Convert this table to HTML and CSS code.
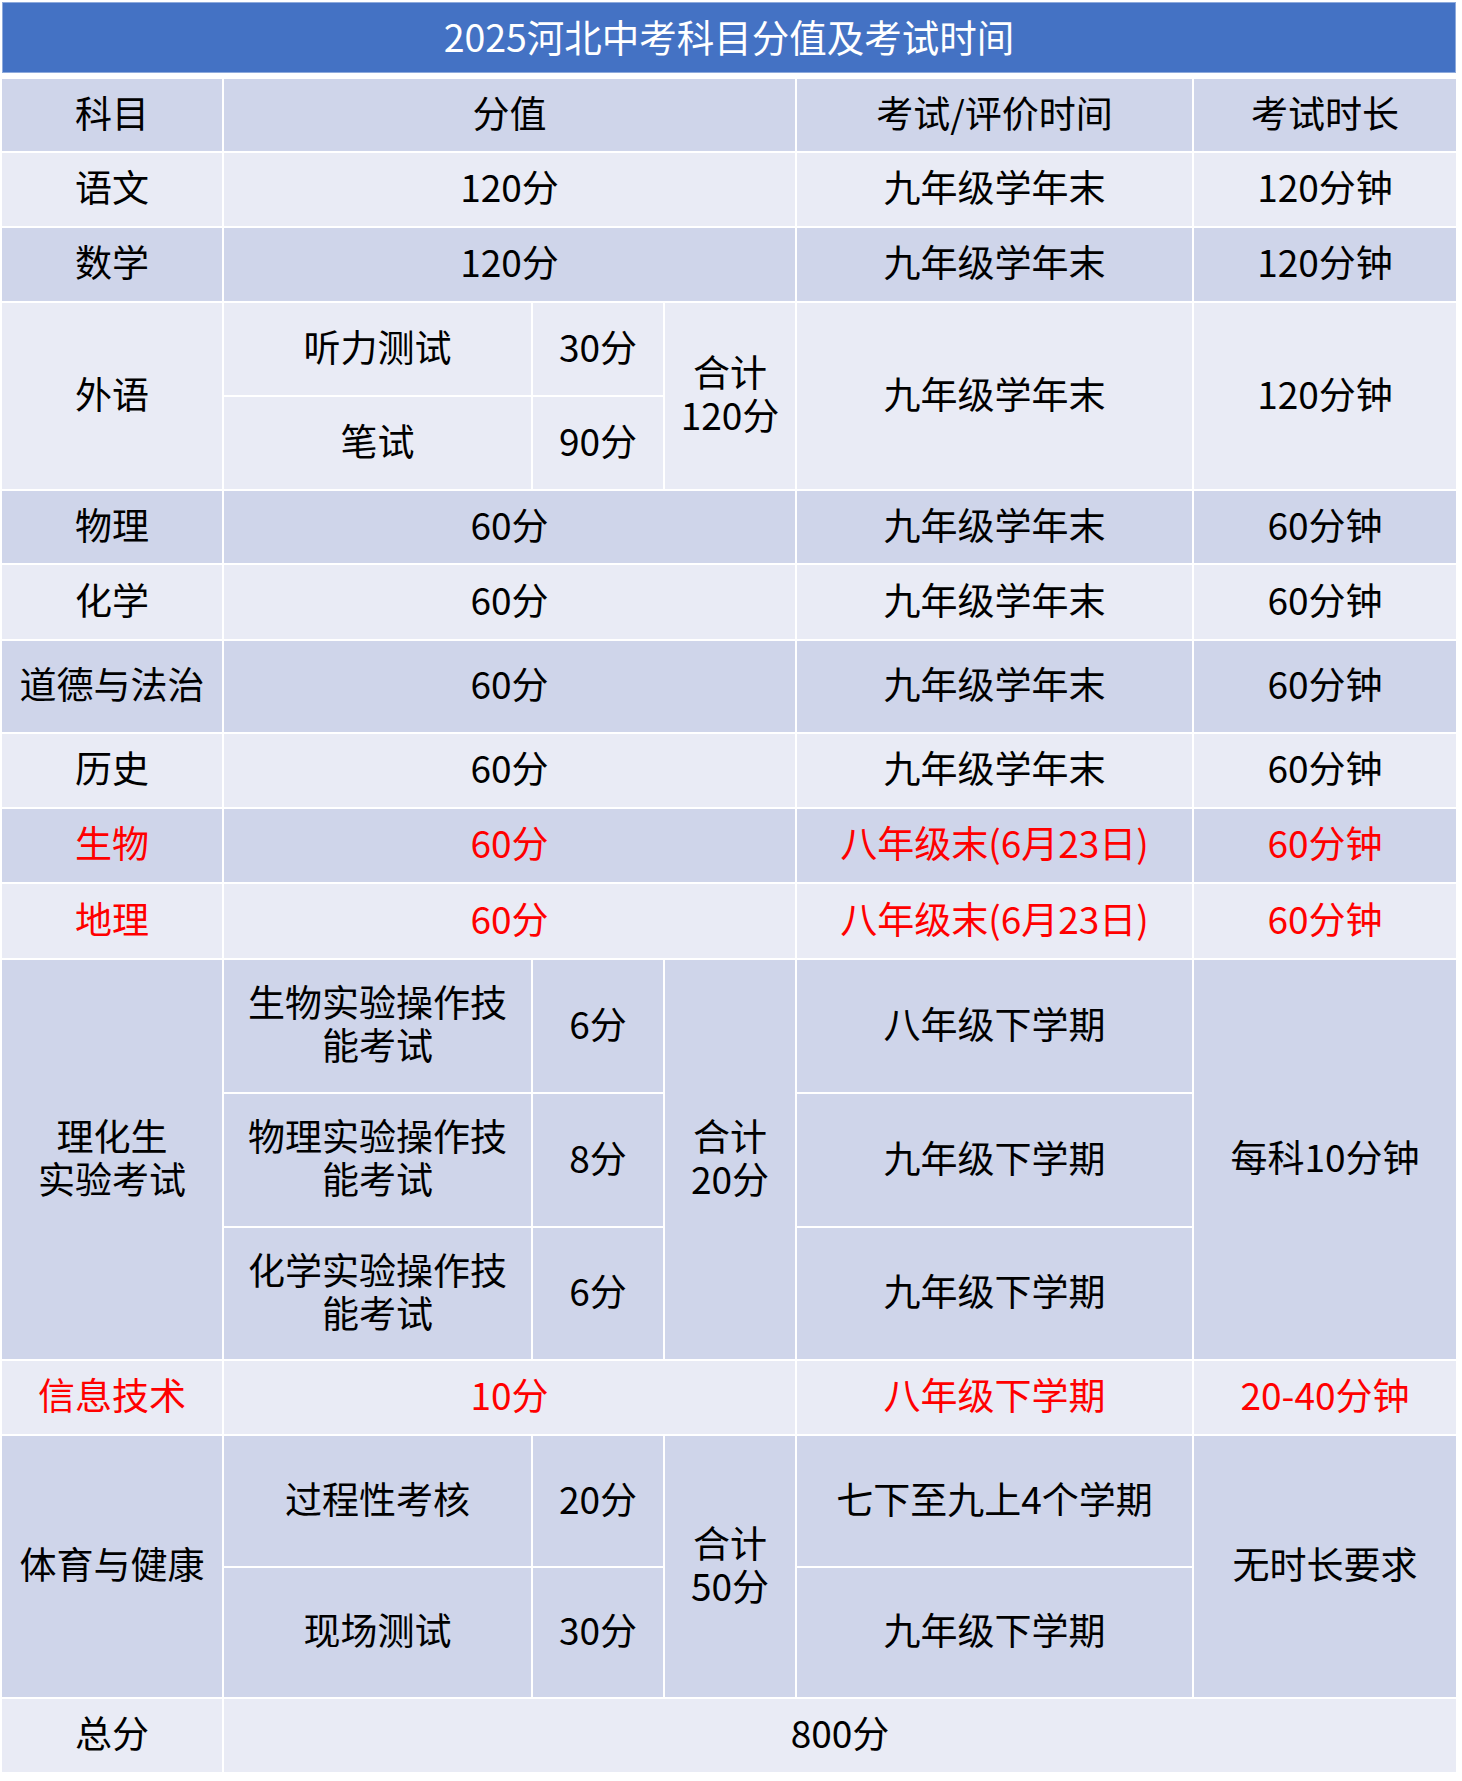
FILE: index.html
```html
<!DOCTYPE html>
<html lang="zh-CN">
<head>
<meta charset="utf-8">
<title>2025河北中考科目分值及考试时间</title>
<link rel="stylesheet" href="styles.css">
</head>
<body>
<div class="wrap">
  <div class="title">2025河北中考科目分值及考试时间</div>
  <div class="grid">
    <!-- header -->
    <div class="c dark r1 c1">科目</div>
    <div class="c dark r1 c2s3">分值</div>
    <div class="c dark r1 c5">考试/评价时间</div>
    <div class="c dark r1 c6">考试时长</div>

    <div class="c light r2 c1">语文</div>
    <div class="c light r2 c2s3">120分</div>
    <div class="c light r2 c5">九年级学年末</div>
    <div class="c light r2 c6">120分钟</div>

    <div class="c dark r3 c1">数学</div>
    <div class="c dark r3 c2s3">120分</div>
    <div class="c dark r3 c5">九年级学年末</div>
    <div class="c dark r3 c6">120分钟</div>

    <div class="c light r4s2 c1">外语</div>
    <div class="c light r4 c2">听力测试</div>
    <div class="c light r4 c3">30分</div>
    <div class="c light r4s2 c4"><span class="ln">合计</span><span class="ln">120分</span></div>
    <div class="c light r4s2 c5">九年级学年末</div>
    <div class="c light r4s2 c6">120分钟</div>
    <div class="c light r5 c2">笔试</div>
    <div class="c light r5 c3">90分</div>

    <div class="c dark r6 c1">物理</div>
    <div class="c dark r6 c2s3">60分</div>
    <div class="c dark r6 c5">九年级学年末</div>
    <div class="c dark r6 c6">60分钟</div>

    <div class="c light r7 c1">化学</div>
    <div class="c light r7 c2s3">60分</div>
    <div class="c light r7 c5">九年级学年末</div>
    <div class="c light r7 c6">60分钟</div>

    <div class="c dark r8 c1">道德与法治</div>
    <div class="c dark r8 c2s3">60分</div>
    <div class="c dark r8 c5">九年级学年末</div>
    <div class="c dark r8 c6">60分钟</div>

    <div class="c light r9 c1">历史</div>
    <div class="c light r9 c2s3">60分</div>
    <div class="c light r9 c5">九年级学年末</div>
    <div class="c light r9 c6">60分钟</div>

    <div class="c dark red r10 c1">生物</div>
    <div class="c dark red r10 c2s3">60分</div>
    <div class="c dark red r10 c5">八年级末(6月23日)</div>
    <div class="c dark red r10 c6">60分钟</div>

    <div class="c light red r11 c1">地理</div>
    <div class="c light red r11 c2s3">60分</div>
    <div class="c light red r11 c5">八年级末(6月23日)</div>
    <div class="c light red r11 c6">60分钟</div>

    <div class="c dark r12s3 c1"><span class="ln">理化生</span><span class="ln">实验考试</span></div>
    <div class="c dark r12 c2"><span class="ln">生物实验操作技</span><span class="ln">能考试</span></div>
    <div class="c dark r12 c3">6分</div>
    <div class="c dark r12s3 c4"><span class="ln">合计</span><span class="ln">20分</span></div>
    <div class="c dark r12 c5">八年级下学期</div>
    <div class="c dark r12s3 c6">每科10分钟</div>
    <div class="c dark r13 c2"><span class="ln">物理实验操作技</span><span class="ln">能考试</span></div>
    <div class="c dark r13 c3">8分</div>
    <div class="c dark r13 c5">九年级下学期</div>
    <div class="c dark r14 c2"><span class="ln">化学实验操作技</span><span class="ln">能考试</span></div>
    <div class="c dark r14 c3">6分</div>
    <div class="c dark r14 c5">九年级下学期</div>

    <div class="c light red r15 c1">信息技术</div>
    <div class="c light red r15 c2s3">10分</div>
    <div class="c light red r15 c5">八年级下学期</div>
    <div class="c light red r15 c6">20-40分钟</div>

    <div class="c dark r16s2 c1">体育与健康</div>
    <div class="c dark r16 c2">过程性考核</div>
    <div class="c dark r16 c3">20分</div>
    <div class="c dark r16s2 c4"><span class="ln">合计</span><span class="ln">50分</span></div>
    <div class="c dark r16 c5">七下至九上4个学期</div>
    <div class="c dark r16s2 c6">无时长要求</div>
    <div class="c dark r17 c2">现场测试</div>
    <div class="c dark r17 c3">30分</div>
    <div class="c dark r17 c5">九年级下学期</div>

    <div class="c light r18 c1">总分</div>
    <div class="c light r18 c2s5">800分</div>
  </div>
</div>
</body>
</html>
```
FILE: styles.css
```css
html, body {
  margin: 0;
  padding: 0;
  background: #ffffff;
}

body {
  font-family: "Noto Sans CJK SC", "Noto Sans", sans-serif;
  font-size: 37px;
  color: #000000;
}

.wrap {
  padding: 2px 0 0 2px;
  width: 1454px;
}

.title {
  height: 71px;
  box-sizing: border-box;
  background: #4472c4;
  border: 1px solid #8eaadc;
  color: #ffffff;
  font-size: 37.5px;
  display: flex;
  align-items: center;
  justify-content: center;
  padding-bottom: 3px;
  margin-bottom: 6px;
  line-height: 1;
}

.grid {
  display: grid;
  grid-template-columns: 220px 307px 130px 130px 395px 262px;
  grid-template-rows:
    72px 73px 73px 92px 92px 72px 74px 91px 73px 73px 74px
    132px 132px 131px 73px 130px 129px 73px;
  gap: 2px;
  background: #ffffff;
}

.c {
  display: flex;
  flex-direction: column;
  align-items: center;
  justify-content: center;
  text-align: center;
  line-height: 43px;
  white-space: nowrap;
  padding-bottom: 6px;
  box-sizing: border-box;
}

.ln {
  display: block;
  height: 43px;
  line-height: 43px;
}

.dark { background: #cfd5ea; }
.light { background: #e9ebf5; }
.red { color: #ff0000; }

/* columns */
.c1 { grid-column: 1; }
.c2 { grid-column: 2; }
.c3 { grid-column: 3; }
.c4 { grid-column: 4; }
.c5 { grid-column: 5; }
.c6 { grid-column: 6; }
.c2s3 { grid-column: 2 / span 3; }
.c2s5 { grid-column: 2 / span 5; }

/* rows */
.r1 { grid-row: 1; }
.r2 { grid-row: 2; }
.r3 { grid-row: 3; }
.r4 { grid-row: 4; }
.r5 { grid-row: 5; }
.r4s2 { grid-row: 4 / span 2; }
.r6 { grid-row: 6; }
.r7 { grid-row: 7; }
.r8 { grid-row: 8; }
.r9 { grid-row: 9; }
.r10 { grid-row: 10; }
.r11 { grid-row: 11; }
.r12 { grid-row: 12; }
.r13 { grid-row: 13; }
.r14 { grid-row: 14; }
.r12s3 { grid-row: 12 / span 3; }
.r15 { grid-row: 15; }
.r16 { grid-row: 16; }
.r17 { grid-row: 17; }
.r16s2 { grid-row: 16 / span 2; }
.r18 { grid-row: 18; }
```
